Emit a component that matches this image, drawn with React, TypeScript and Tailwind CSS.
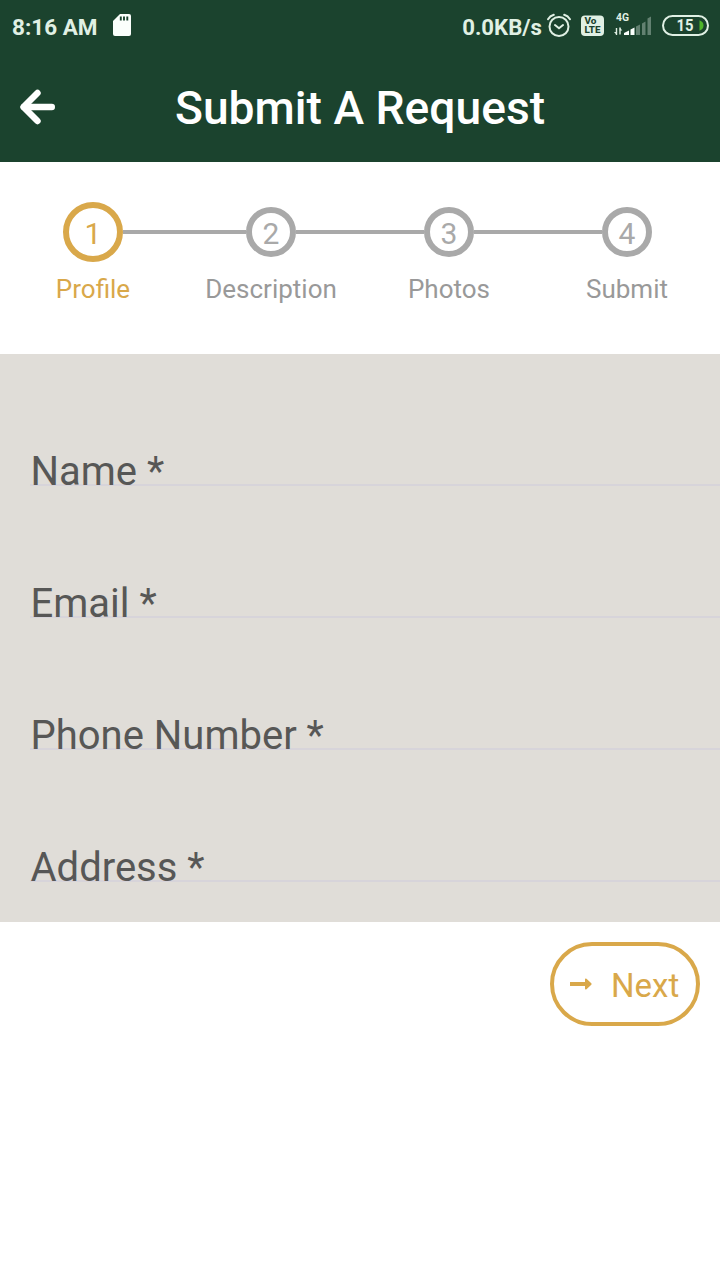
import React from 'react';

const steps = [
  { id: 1, label: 'Profile', active: true },
  { id: 2, label: 'Description', active: false },
  { id: 3, label: 'Photos', active: false },
  { id: 4, label: 'Submit', active: false }
];

const fields = ['Name *', 'Email *', 'Phone Number *', 'Address *'];

function StatusBar() {
  return (
    <div className="flex h-[50px] items-center bg-[#1b432e] pl-3 pr-[11px] text-[#e0f0e4]">
      <span className="text-[22.5px] font-bold leading-[48px] pt-1">8:16 AM</span>
      <svg className="ml-4" width="18" height="22" viewBox="0 0 18 22">
        <path d="M7 0H16a2 2 0 0 1 2 2V20a2 2 0 0 1-2 2H2a2 2 0 0 1-2-2V7Z" fill="#fbfffc" />
        <path d="M7.8 2.5v4M11 2.5v4M14.3 2.5v4" stroke="#1b432e" strokeWidth="1.9" />
      </svg>

      <div className="ml-auto flex items-center pt-0.5">
        <span className="text-[22.2px] font-bold leading-[48px] pt-0.5">0.0KB/s</span>
        <svg className="ml-[5px]" width="24" height="26" viewBox="0 0 24 26" fill="none" stroke="#e0f0e4" strokeWidth="2">
          <circle cx="12" cy="13.5" r="9.5" />
          <path d="M8 12l4 3.2 4-3.2M1 6.2Q3 3 6.8 1.8M23 6.2Q21 3 17.2 1.8" strokeLinecap="round" />
        </svg>
        <svg className="ml-[10px]" width="23" height="22" viewBox="0 0 23 22">
          <rect width="23" height="20.5" y="0.5" rx="4" fill="#e0f0e4" />
          <text x="3.5" y="9.3" fontSize="9" fontWeight="800" fill="#1b432e" textLength="12" lengthAdjust="spacingAndGlyphs">Vo</text>
          <text x="3.5" y="18.3" fontSize="9.5" fontWeight="800" fill="#1b432e" textLength="16" lengthAdjust="spacingAndGlyphs">LTE</text>
        </svg>
        <svg className="ml-[10px]" width="40" height="28" viewBox="0 0 40 28">
          <text x="2" y="8.5" fontSize="10" fontWeight="700" fill="#e0f0e4" textLength="13" lengthAdjust="spacingAndGlyphs">4G</text>
          <path d="M2.5 23v-7M6 15.5v7" stroke="#e0f0e4" strokeWidth="1.4" />
          <path d="M0 20L2.8 23V20ZM5.8 15.5v3h2.5Z" fill="#e0f0e4" />
          <path d="M10 23v-2l5-2.5V23ZM16.5 23v-5.500l4-2V23Z" fill="#fbfffc" />
          <path d="M22 23v-8.500l4-2V23ZM28 23V11.500l3.500-2V23ZM33.500 23V6.500L37 4.500V23Z" fill="#638171" />
        </svg>
        <svg className="ml-2" width="47" height="22" viewBox="0 0 47 22">
          <rect x="1" y="1" width="45" height="19" rx="9.500" fill="none" stroke="#e0f0e4" strokeWidth="2" />
          <path d="M37.500 5.300q4 1.500 4 5.200t-4 5.200Z" fill="#4fb52a" />
          <text x="14.500" y="16.300" fontSize="17" fontWeight="700" fill="#e0f0e4" textLength="17" lengthAdjust="spacingAndGlyphs">15</text>
        </svg>
      </div>
    </div>
  );
}

function Header() {
  return (
    <header className="grid h-28 grid-cols-[60px_1fr_60px] items-center bg-[#1b432e] text-white">
      <button className="pl-[19px] pt-0.5" aria-label="Back">
        <svg width="37" height="36" viewBox="0 0 37 36" fill="none" stroke="currentColor" strokeWidth="6.4" strokeLinecap="round" strokeLinejoin="round">
          <path d="M18.500 4L4.500 18l14 14" />
          <path d="M5 18H32.800" />
        </svg>
      </button>
      <h1 className="text-center text-[46.2px] font-medium leading-[54px] whitespace-nowrap pt-1">Submit A Request</h1>
    </header>
  );
}

function Stepper() {
  return (
    <div className="h-48 bg-white px-1 pt-10">
      <ol className="grid grid-cols-4">
        {steps.map((step, i) => (
          <li key={step.id} className={`flex flex-col items-center ${step.active ? 'text-[#d9a84a]' : 'text-[#999999]'}`}>
            <div className="flex h-[60px] w-full items-center">
              <span className={`h-1 flex-1 ${i === 0 ? '' : 'bg-[#a9a9a9]'}`} />
              <span
                className={`flex items-center justify-center rounded-full border-6 pt-[3px] text-[30px] leading-none ${
                  step.active ? 'size-[60px] border-[#d9a84a]' : 'size-[50px] border-[#a9a9a9] text-[#a9a9a9]'
                }`}
              >
                {step.id}
              </span>
              <span className={`h-1 flex-1 ${i === steps.length - 1 ? '' : 'bg-[#a9a9a9]'}`} />
            </div>
            <span className="mt-3 text-[26px] leading-[30px]">{step.label}</span>
          </li>
        ))}
      </ol>
    </div>
  );
}

export default function App() {
  return (
    <main className="h-[1280px] w-[720px] overflow-hidden bg-white font-['Roboto',sans-serif]">
      <StatusBar />
      <Header />
      <Stepper />

      <form className="h-[568px] bg-[#e0ddd8]">
        {fields.map((field) => (
          <div key={field} className="ml-[30px] h-[132px] border-b-2 border-[#d7d4da]">
            <label className="block pl-[0.5px] pt-[94px] text-[40px] leading-[47px] text-[#575756]">{field}</label>
          </div>
        ))}
      </form>

      <div className="flex justify-end px-5 pt-5">
        <button className="flex h-21 w-[150px] items-center rounded-full border-4 border-[#d9a84a] pl-4 text-[#d9a84a]">
          <svg width="22" height="12" viewBox="0 0 22 12" fill="currentColor">
            <path d="M0 4H15V1.500Q15 0 16.500 0.800L21.300 5.200Q22 6 21.300 6.800L16.500 11.200Q15 12 15 10.500V8H0Z" />
          </svg>
          <span className="ml-[19px] pt-0.5 text-[33px] leading-none">Next</span>
        </button>
      </div>
    </main>
  );
}
